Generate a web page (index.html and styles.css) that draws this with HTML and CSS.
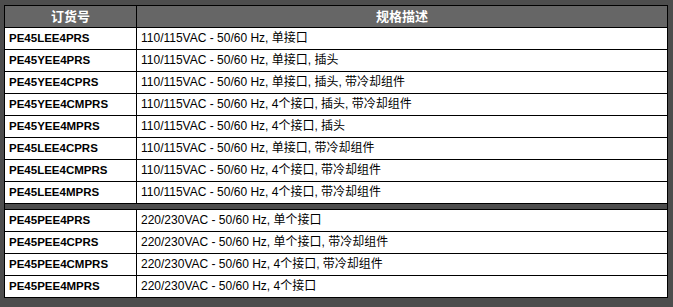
FILE: index.html
```html
<!DOCTYPE html>
<html lang="zh">
<head>
<meta charset="utf-8">
<link rel="stylesheet" href="styles.css">
</head>
<body>
<table class="spec">
  <colgroup><col class="c1"><col class="c2"></colgroup>
  <thead>
    <tr><th>订货号</th><th>规格描述</th></tr>
  </thead>
  <tbody>
    <tr><td class="code">PE45LEE4PRS</td><td>110/115VAC - 50/60 Hz, 单接口</td></tr>
    <tr><td class="code">PE45YEE4PRS</td><td>110/115VAC - 50/60 Hz, 单接口, 插头</td></tr>
    <tr><td class="code">PE45YEE4CPRS</td><td>110/115VAC - 50/60 Hz, 单接口, 插头, 带冷却组件</td></tr>
    <tr><td class="code">PE45YEE4CMPRS</td><td>110/115VAC - 50/60 Hz, 4个接口, 插头, 带冷却组件</td></tr>
    <tr><td class="code">PE45YEE4MPRS</td><td>110/115VAC - 50/60 Hz, 4个接口, 插头</td></tr>
    <tr><td class="code">PE45LEE4CPRS</td><td>110/115VAC - 50/60 Hz, 单接口, 带冷却组件</td></tr>
    <tr><td class="code">PE45LEE4CMPRS</td><td>110/115VAC - 50/60 Hz, 4个接口, 带冷却组件</td></tr>
    <tr><td class="code">PE45LEE4MPRS</td><td>110/115VAC - 50/60 Hz, 4个接口, 带冷却组件</td></tr>
    <tr class="sep"><td colspan="2"></td></tr>
    <tr><td class="code">PE45PEE4PRS</td><td>220/230VAC - 50/60 Hz, 单个接口</td></tr>
    <tr><td class="code">PE45PEE4CPRS</td><td>220/230VAC - 50/60 Hz, 单个接口, 带冷却组件</td></tr>
    <tr><td class="code">PE45PEE4CMPRS</td><td>220/230VAC - 50/60 Hz, 4个接口, 带冷却组件</td></tr>
    <tr><td class="code">PE45PEE4MPRS</td><td>220/230VAC - 50/60 Hz, 4个接口</td></tr>
  </tbody>
</table>
</body>
</html>
```
FILE: styles.css
```css
html, body {
  margin: 0;
  padding: 0;
  background: #4d4d4d;
}
body {
  padding: 5px 0 0 4px;
  font-family: "Liberation Sans", Arial, "Noto Sans CJK SC", sans-serif;
  font-size: 12px;
  color: #000;
}
.spec {
  border-collapse: collapse;
  width: 663px;
  table-layout: fixed;
}
.c1 { width: 132px; }
.c2 { width: 531px; }
.spec th, .spec td {
  border: 1px solid #000;
  padding: 0 4px;
  box-sizing: border-box;
  text-align: left;
  vertical-align: middle;
  line-height: 15px;
  white-space: nowrap;
}
.spec th {
  background: #666666;
  color: #fff;
  font-weight: bold;
  font-size: 13px;
  text-align: center;
  height: 22px;
}
.spec td { background: #fff; height: 22px; }
.spec td.code { font-weight: bold; font-size: 11.5px; }
.spec .sep td {
  background: #4d4d4d;
  height: 6px;
  padding: 0;
}
```
